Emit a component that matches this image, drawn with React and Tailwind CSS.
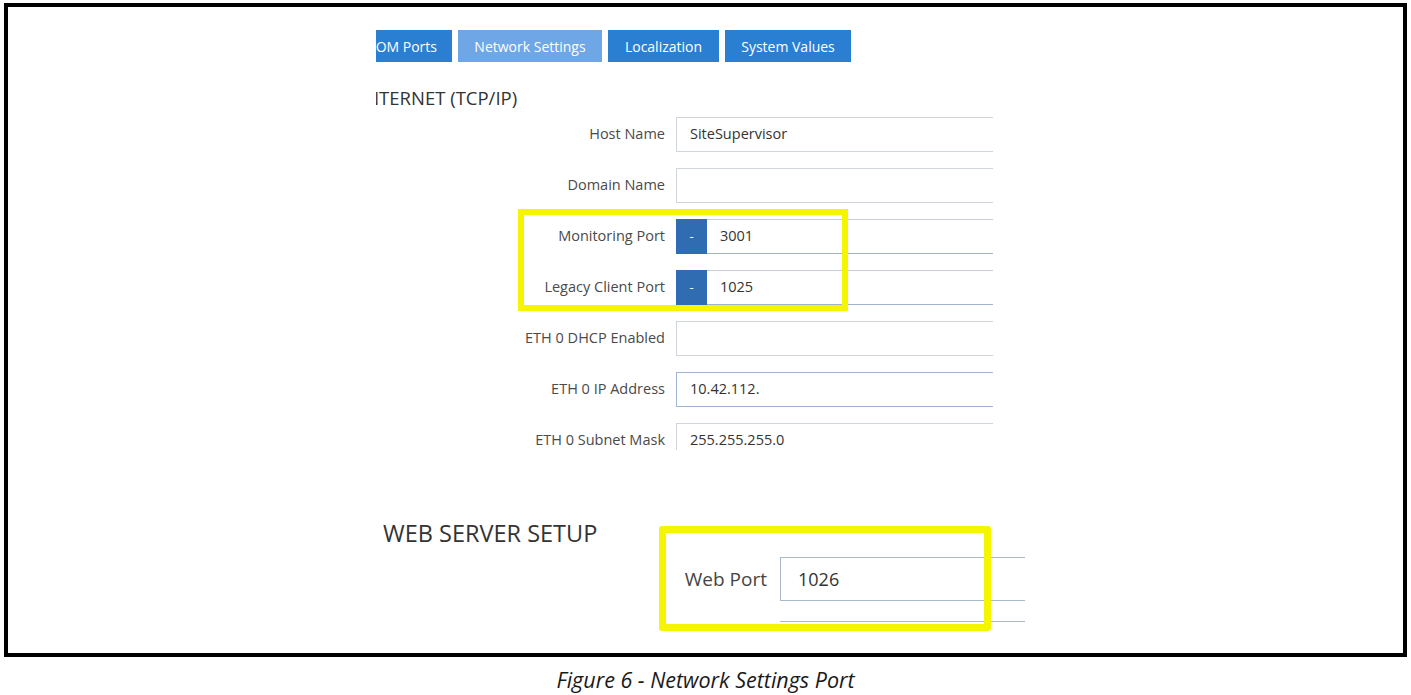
const ui = { fontFamily: '"Open Sans", "Noto Sans", sans-serif' };

const tabs = [
  { label: 'COM Ports', w: 'w-[76px]', active: false, clip: true },
  { label: 'Network Settings', w: 'w-[144px]', active: true },
  { label: 'Localization', w: 'w-[111px]', active: false },
  { label: 'System Values', w: 'w-[126px]', active: false },
];

const rows = [
  { label: 'Host Name', value: 'SiteSupervisor' },
  { label: 'Domain Name', value: '' },
  { label: 'Monitoring Port', value: '3001', port: true },
  { label: 'Legacy Client Port', value: '1025', port: true },
  { label: 'ETH 0 DHCP Enabled', value: '' },
  { label: 'ETH 0 IP Address', value: '10.42.112.', blue: true },
  { label: 'ETH 0 Subnet Mask', value: '255.255.255.0' },
];

const Row = ({ label, value, port, blue }) => (
  <div className="flex items-center h-[35px]">
    <div className="w-[289px] shrink-0 text-right text-[14.5px] text-[#4a4a4a] whitespace-nowrap">{label}</div>
    <div className="ml-[11px] shrink-0 flex h-full w-[330px]">
      {port ? (
        <>
          <div className="w-[31px] h-full bg-[#2f6cb2] text-white text-[13px] flex items-center justify-center">-</div>
          <div className="flex-1 h-full border-t border-b border-t-[#c9ced6] border-b-[#9fb4cc] flex items-center pl-[13px] text-[14.5px] text-[#333]">{value}</div>
        </>
      ) : (
        <div className={'flex-1 h-full border flex items-center pl-[13px] text-[14.5px] text-[#333] ' + (blue ? 'border-[#9fb7d2]' : 'border-[#d0d4db]')}>{value}</div>
      )}
    </div>
  </div>
);

export default function App() {
  return (
    <div className="relative w-[1411px] h-[695px] bg-white overflow-hidden" style={ui}>
      <div className="ml-[4px] mt-[3px] w-[1403px] h-[654px] border-[4px] border-black">
        <div className="ml-[368px] w-[617px] h-[443px] overflow-hidden pt-[23px]">
          <div className="flex gap-[6px]">
            {tabs.map((t) => (
              <div
                key={t.label}
                className={
                  t.w +
                  ' h-[32px] shrink-0 flex items-center overflow-hidden whitespace-nowrap text-white text-[14px] ' +
                  (t.clip ? 'justify-end pr-[15px] ' : 'justify-center ') +
                  (t.active ? 'bg-[#6ea6e6]' : 'bg-[#2b7fd3]')
                }
              >
                {t.label}
              </div>
            ))}
          </div>
          <div className="mt-[22px] -ml-[16px] text-[18.5px] text-[#333] whitespace-nowrap">INTERNET (TCP/IP)</div>
          <div className="mt-[5px] flex flex-col gap-[16px]">
            {rows.map((r) => (
              <Row key={r.label} {...r} />
            ))}
          </div>
        </div>

        <div className="mt-[68px] ml-[375px] text-[23.5px] text-[#333] leading-[30px]">WEB SERVER SETUP</div>
        <div className="mt-[9px] ml-[650px] flex items-center">
          <div className="w-[122px] shrink-0 text-right text-[19px] text-[#444] pr-[13px]">Web Port</div>
          <div className="w-[245px] shrink-0 h-[44px] border-t border-l border-b border-[#a9b9cc] flex items-center pl-[17px] text-[18px] text-[#333]">1026</div>
        </div>
        <div className="mt-[20px] ml-[772px] w-[245px] h-px bg-[#a9b9cc]"></div>
      </div>

      <div className="mt-[7px] text-center italic text-[21.5px] text-[#1a1a1a]" style={ui}>Figure 6 - Network Settings Port</div>

      <div className="absolute left-[518px] top-[209px] w-[330px] h-[102px] border-[6px] border-[#f5f500]"></div>
      <div className="absolute left-[659px] top-[526px] w-[332px] h-[105px] border-[7px] border-[#f5f500] rounded-[3px]"></div>
    </div>
  );
}
